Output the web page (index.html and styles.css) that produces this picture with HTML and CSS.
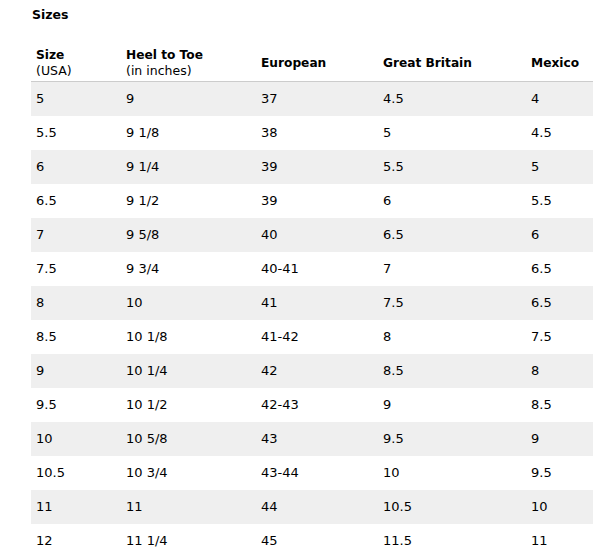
FILE: index.html
```html
<!DOCTYPE html>
<html lang="en">

<head>
    <meta charset="UTF-8">
    <title>Sizes</title>
    <link rel="stylesheet" href="styles.css">
</head>

<body>
    <div class="container">
        <h3 class="title">Sizes</h3>
        <table class="sizes">
            <thead>
                <tr>
                    <th class="col-size">Size<span class="sub">(USA)</span></th>
                    <th class="col-heel">Heel to Toe<span class="sub">(in inches)</span></th>
                    <th class="col-eu">European</th>
                    <th class="col-gb">Great Britain</th>
                    <th>Mexico</th>
                </tr>
            </thead>
            <tbody>
                <tr><td>5</td><td>9</td><td>37</td><td>4.5</td><td>4</td></tr>
                <tr><td>5.5</td><td>9 1/8</td><td>38</td><td>5</td><td>4.5</td></tr>
                <tr><td>6</td><td>9 1/4</td><td>39</td><td>5.5</td><td>5</td></tr>
                <tr><td>6.5</td><td>9 1/2</td><td>39</td><td>6</td><td>5.5</td></tr>
                <tr><td>7</td><td>9 5/8</td><td>40</td><td>6.5</td><td>6</td></tr>
                <tr><td>7.5</td><td>9 3/4</td><td>40-41</td><td>7</td><td>6.5</td></tr>
                <tr><td>8</td><td>10</td><td>41</td><td>7.5</td><td>6.5</td></tr>
                <tr><td>8.5</td><td>10 1/8</td><td>41-42</td><td>8</td><td>7.5</td></tr>
                <tr><td>9</td><td>10 1/4</td><td>42</td><td>8.5</td><td>8</td></tr>
                <tr><td>9.5</td><td>10 1/2</td><td>42-43</td><td>9</td><td>8.5</td></tr>
                <tr><td>10</td><td>10 5/8</td><td>43</td><td>9.5</td><td>9</td></tr>
                <tr><td>10.5</td><td>10 3/4</td><td>43-44</td><td>10</td><td>9.5</td></tr>
                <tr><td>11</td><td>11</td><td>44</td><td>10.5</td><td>10</td></tr>
                <tr><td>12</td><td>11 1/4</td><td>45</td><td>11.5</td><td>11</td></tr>
            </tbody>
        </table>
    </div>
</body>

</html>
```

FILE: styles.css
```css
* {
    margin: 0;
    padding: 0;
    box-sizing: border-box;
}

body,
html {
    width: 100%;
    background-color: #FFF;
    font-family: "DejaVu Sans", Verdana, sans-serif;
    font-size: 13px;
    color: #000;
}

.container {
    padding: 7px 0 0 31px;
}

.title {
    font-size: 12.5px;
    font-weight: bold;
    line-height: 16px;
    padding-left: 1px;
    margin-bottom: 24px;
}

.sizes {
    width: 100%;
    border-collapse: collapse;
}

.sizes th {
    text-align: left;
    font-size: 12.2px;
    font-weight: bold;
    line-height: 15px;
    padding: 1px 5px 3px;
    vertical-align: middle;
    border-bottom: 1px solid #CCC;
}

.sizes th .sub {
    display: block;
    font-size: 12.5px;
    font-weight: normal;
}

.sizes td {
    height: 34px;
    padding: 0 5px;
    line-height: 16px;
    vertical-align: middle;
}

.sizes tbody tr:nth-child(odd) {
    background-color: #EFEFEF;
}

.col-size {
    width: 90px;
}

.col-heel {
    width: 135px;
}

.col-eu {
    width: 122px;
}

.col-gb {
    width: 148px;
}
```
